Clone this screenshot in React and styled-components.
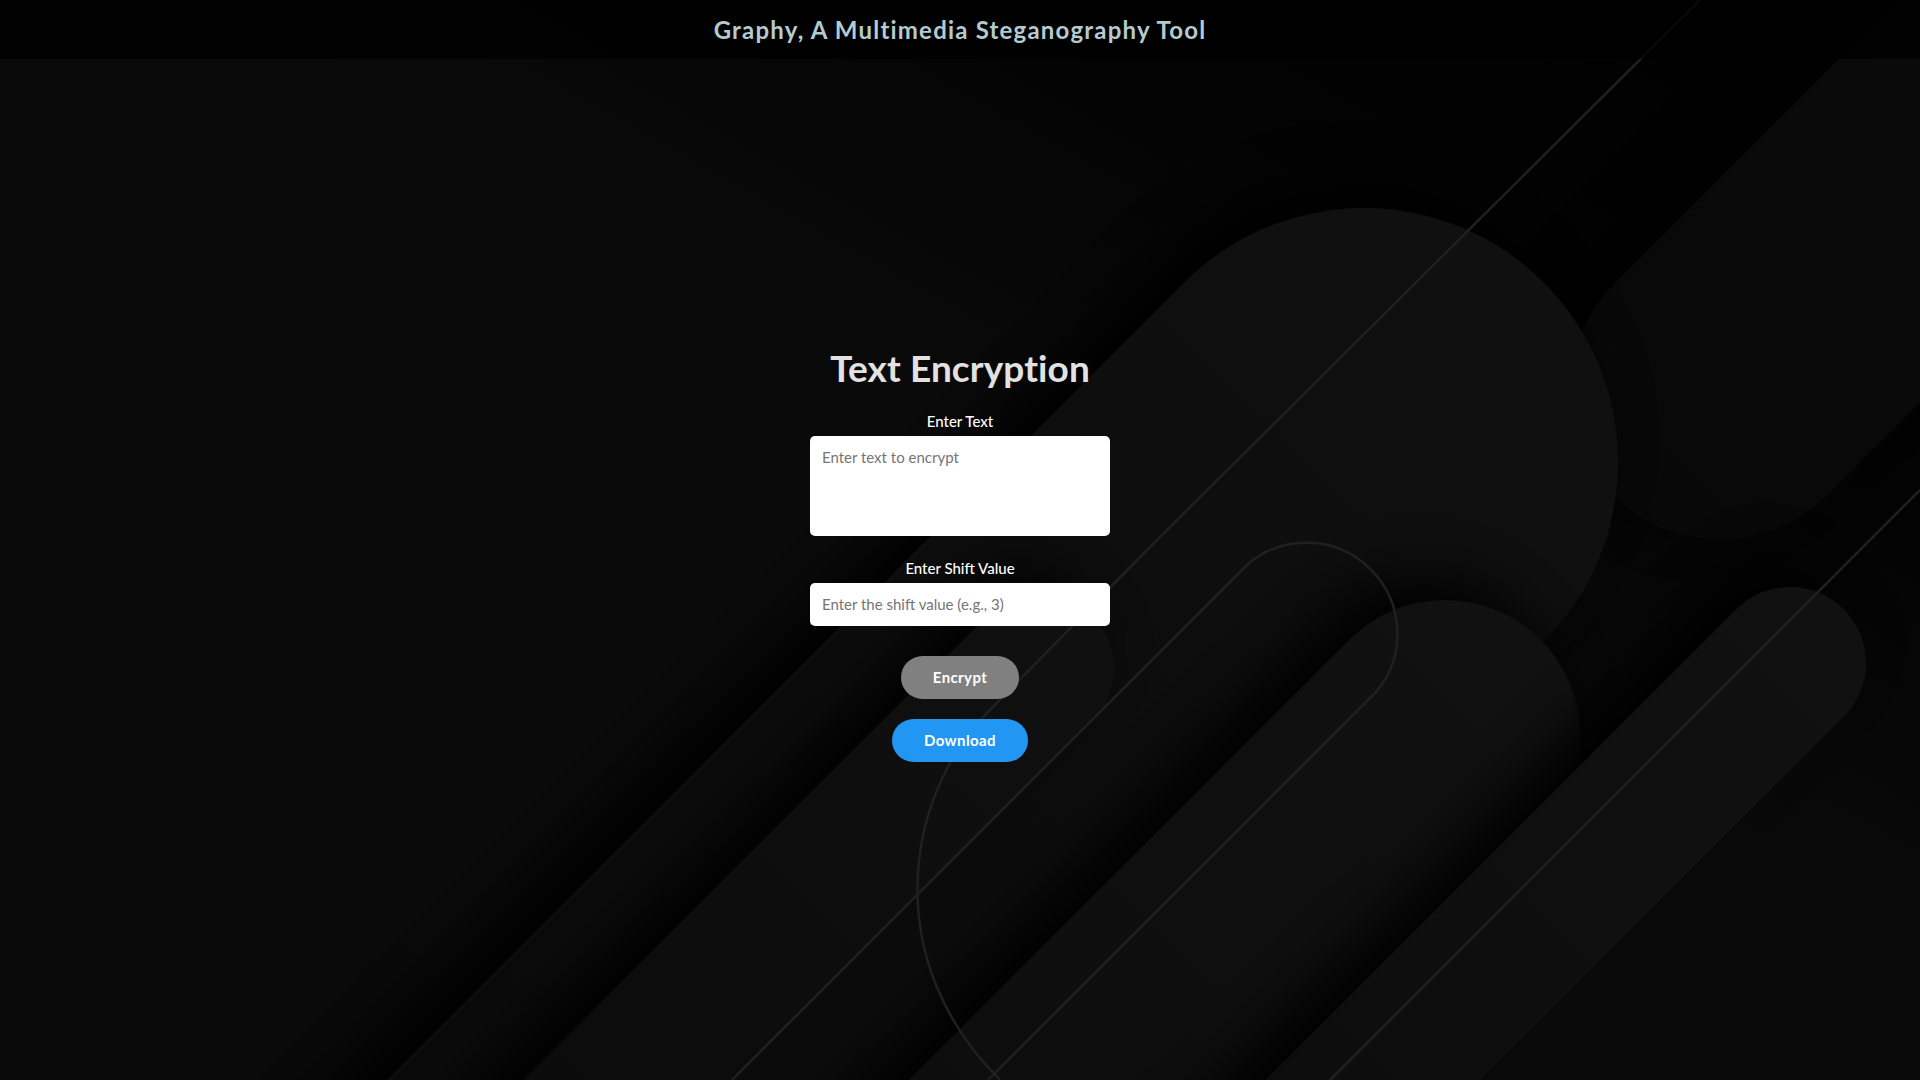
import { useState } from "react";
import styled, { createGlobalStyle } from "styled-components";

const GlobalStyle = createGlobalStyle`
  * {
    box-sizing: border-box;
  }
  html,
  body {
    margin: 0;
    padding: 0;
    background: #0a0a0a;
    font-family: Lato, "Open Sans", Arial, sans-serif;
  }
`;

const StyledPage = styled.div`
  position: relative;
  min-height: 100vh;
  display: flex;
  flex-direction: column;
  overflow: hidden;
  color: #fff;
`;

const Backdrop = styled.svg`
  position: absolute;
  inset: 0;
  width: 100%;
  height: 100%;
  z-index: 0;
`;

const Header = styled.header`
  position: relative;
  z-index: 1;
  height: 59px;
  display: flex;
  align-items: center;
  justify-content: center;
  background: rgba(0, 0, 0, 0.72);
  h1 {
    margin: 0;
    font-size: 24px;
    font-weight: 700;
    color: #b3cbcf;
    letter-spacing: 1.2px;
  }
`;

const Main = styled.main`
  position: relative;
  z-index: 1;
  flex: 1;
  display: flex;
  flex-direction: column;
  align-items: center;
  justify-content: center;
  padding-bottom: 32px;
`;

const Title = styled.h2`
  margin: 0 0 22px;
  font-size: 37px;
  line-height: 44px;
  font-weight: 700;
  color: #e2e2e2;
  letter-spacing: 0.1px;
`;

const Field = styled.div`
  display: flex;
  flex-direction: column;
  align-items: center;
  width: 300px;
  margin-bottom: ${(p) => p.$gap || 23}px;
`;

const Label = styled.label`
  font-size: 15px;
  line-height: 19px;
  font-weight: 500;
  color: #ffffff;
  margin-bottom: 5px;
`;

const TextBox = styled.textarea`
  width: 300px;
  height: 100px;
  border: none;
  border-radius: 5px;
  padding: 12px;
  font-family: inherit;
  font-size: 15px;
  line-height: 19px;
  resize: none;
  outline: none;
  background: #fff;
  &::placeholder {
    color: #757575;
  }
`;

const Input = styled.input`
  width: 300px;
  height: 43px;
  border: none;
  border-radius: 5px;
  padding: 12px;
  font-family: inherit;
  font-size: 15px;
  line-height: 19px;
  outline: none;
  background: #fff;
  &::placeholder {
    color: #757575;
  }
`;

const Button = styled.button`
  border: none;
  border-radius: 22px;
  padding: 12px 32px;
  height: 43px;
  font-family: inherit;
  font-size: 15px;
  line-height: 19px;
  font-weight: 700;
  letter-spacing: 0.4px;
  color: #fff;
  cursor: pointer;
  background: ${(p) => (p.$blue ? "#2196f3" : "#808080")};
  margin-bottom: ${(p) => p.$gap || 0}px;
`;

function Capsule({ cx, cy, r, len, angle = 135, fill, dx = 0, dy = 0, filter, opacity }) {
  return (
    <rect
      x={-r}
      y={-r}
      width={len + 2 * r}
      height={2 * r}
      rx={r}
      transform={`translate(${cx + dx} ${cy + dy}) rotate(${angle})`}
      fill={fill}
      filter={filter}
      opacity={opacity}
    />
  );
}

// capsules of the background art, back to front
const shapes = [
  { cx: 1720, cy: 390, r: 150, len: 420, angle: -45, fill: "url(#fadeE)" },
  { cx: 1364, cy: 462, r: 254, len: 1300, fill: "url(#fadeA)" },
  { cx: 1040, cy: 668, r: 74, len: 900, fill: "url(#fadeD)" },
  { cx: 1445, cy: 735, r: 135, len: 900, fill: "url(#fadeB)" },
  { cx: 1790, cy: 663, r: 76, len: 900, fill: "url(#fadeB)" },
];

function Background() {
  return (
    <Backdrop viewBox="0 0 1920 1080" preserveAspectRatio="xMidYMid slice">
      <defs>
        <linearGradient id="base" x1="0" y1="1" x2="1" y2="0">
          <stop offset="0" stopColor="#090909" />
          <stop offset="0.55" stopColor="#0a0a0a" />
          <stop offset="0.78" stopColor="#030303" />
          <stop offset="1" stopColor="#000" />
        </linearGradient>
        <linearGradient id="fadeA" x1="0" y1="0" x2="1" y2="0">
          <stop offset="0" stopColor="#101010" />
          <stop offset="0.45" stopColor="#0c0c0c" />
          <stop offset="1" stopColor="#0a0a0a" />
        </linearGradient>
        <linearGradient id="fadeB" x1="0" y1="0" x2="1" y2="0">
          <stop offset="0" stopColor="#111111" />
          <stop offset="1" stopColor="#0b0b0b" />
        </linearGradient>
        <linearGradient id="fadeD" x1="0" y1="0" x2="1" y2="0">
          <stop offset="0" stopColor="#101010" />
          <stop offset="1" stopColor="#090909" />
        </linearGradient>
        <linearGradient id="fadeE" x1="0" y1="0" x2="1" y2="0">
          <stop offset="0" stopColor="#080808" />
          <stop offset="1" stopColor="#0b0b0b" />
        </linearGradient>
        <filter id="soft" x="-50%" y="-50%" width="200%" height="200%">
          <feGaussianBlur stdDeviation="28" />
        </filter>
      </defs>
      <rect width="1920" height="1080" fill="url(#base)" />
      {shapes.map((s, i) => (
        <g key={i}>
          <Capsule {...s} fill="#000" dx={-22} dy={-22} filter="url(#soft)" opacity={0.95} />
          <Capsule {...s} />
        </g>
      ))}
      <g fill="none" stroke="#202020" strokeWidth="2.5">
        <path d="M1700 0 L1150 547 L985 715 C905 800 880 960 1000 1080" />
        <path d="M732 1080 L1249 563 A91 91 0 0 1 1377 691 L988 1080" />
        <path d="M1920 490 L1330 1080" />
      </g>
    </Backdrop>
  );
}

export default function App() {
  const [text, setText] = useState("");
  const [shift, setShift] = useState("");

  return (
    <StyledPage>
      <GlobalStyle />
      <Background />
      <Header>
        <h1>Graphy, A Multimedia Steganography Tool</h1>
      </Header>
      <Main>
        <Title>Text Encryption</Title>
        <Field>
          <Label>Enter Text</Label>
          <TextBox
            placeholder="Enter text to encrypt"
            value={text}
            onChange={(e) => setText(e.target.value)}
          />
        </Field>
        <Field $gap={30}>
          <Label>Enter Shift Value</Label>
          <Input
            type="text"
            placeholder="Enter the shift value (e.g., 3)"
            value={shift}
            onChange={(e) => setShift(e.target.value)}
          />
        </Field>
        <Button $gap={20}>Encrypt</Button>
        <Button $blue>Download</Button>
      </Main>
    </StyledPage>
  );
}
